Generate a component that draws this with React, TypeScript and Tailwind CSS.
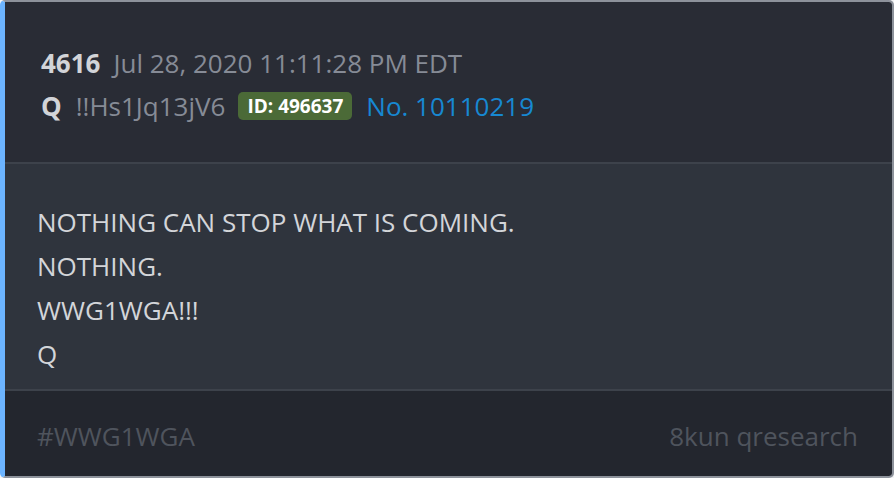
const font = { fontFamily: '"Open Sans", "Noto Sans", sans-serif' }

export default function App() {
  return (
    <div className="h-[478px] w-[894px] bg-[#f3f4f6]" style={font}>
      <div className="flex h-full w-full flex-col overflow-hidden rounded-[5px] border-2 border-l-[5px] border-[#8d929b] border-l-[#6cb4ff]">
        <div className="flex flex-col gap-[11px] bg-[#292c35] pb-[40px] pl-[36px] pt-[45px]">
          <div className="flex items-center gap-[13px] text-[26px] leading-[32px]">
            <span className="font-bold text-[#d2d4d8]">4616</span>
            <span className="text-[#868b96]">Jul 28, 2020 11:11:28 PM EDT</span>
          </div>
          <div className="flex items-center text-[26px] leading-[32px]">
            <span className="font-bold text-[#d2d4d8]">Q</span>
            <span className="ml-[14px] text-[#868b96]">!!Hs1Jq13jV6</span>
            <span className="ml-[13px] rounded-[5px] bg-[#4b6a37] px-[9px] text-[19px] font-bold leading-[28px] text-white">
              ID: 496637
            </span>
            <span className="ml-[14px] text-[#1788d2]">No. 10110219</span>
          </div>
        </div>
        <div className="h-[2px] bg-[#3d424b]" />
        <div className="flex flex-col bg-[#2f343d] pb-[13px] pl-[32px] pt-[36px] text-[26px] leading-[44px] text-[#d3d5d9]">
          <p>NOTHING CAN STOP WHAT IS COMING.</p>
          <p>NOTHING.</p>
          <p>WWG1WGA!!!</p>
          <p>Q</p>
        </div>
        <div className="h-[2px] bg-[#3d424b]" />
        <div className="flex flex-1 items-start justify-between bg-[#23262e] pl-[32px] pr-[34px] pt-[29px] text-[26px] leading-[32px] text-[#4f545d]">
          <span>#WWG1WGA</span>
          <span>8kun qresearch</span>
        </div>
      </div>
    </div>
  )
}
